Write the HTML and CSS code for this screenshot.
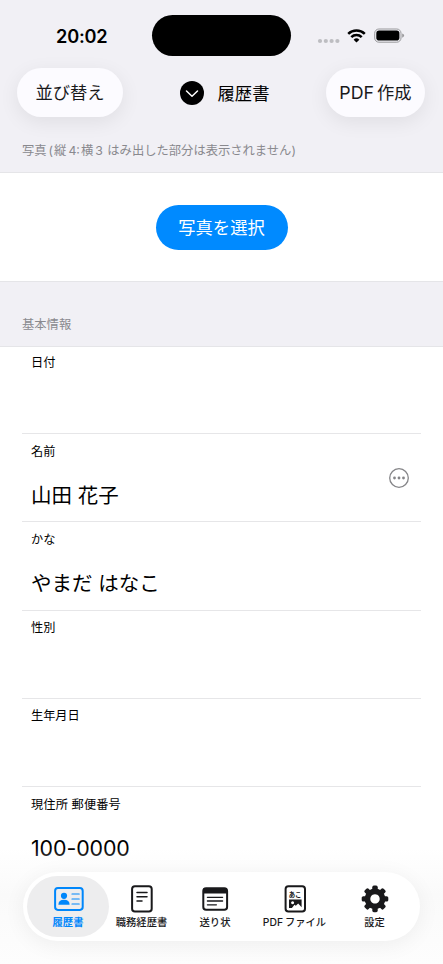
FILE: index.html
```html
<!DOCTYPE html>
<html lang="ja">
<head>
<meta charset="utf-8">
<title>履歴書</title>
<link rel="stylesheet" href="styles.css">
</head>
<body>
<div class="screen">
  <header class="top">
    <div class="status">
      <span class="time">20:02</span>
      <span class="island"></span>
      <svg class="status-icons" width="88" height="18" viewBox="0 0 88 18">
        <g fill="#bdbdc1"><circle cx="3" cy="14" r="2.1"/><circle cx="8.8" cy="14" r="2.1"/><circle cx="14.6" cy="14" r="2.1"/><circle cx="20.4" cy="14" r="2.1"/></g>
        <g fill="none" stroke="#000" stroke-width="2.5"><path d="M31.2 6.9a11.8 11.8 0 0 1 16.6 0"/><path d="M34.3 10.2a7.4 7.4 0 0 1 10.4 0"/></g>
        <path d="M36.6 12.7a4.1 4.1 0 0 1 5.8 0l-2.9 2.9z"/>
        <rect x="57.7" y="2" width="26.3" height="13.2" rx="4.2" fill="none" stroke="#98989b"/>
        <rect x="59.3" y="3.6" width="23.1" height="10" rx="2.8"/>
        <path d="M85.2 6.4q1.9.6 1.9 2.2t-1.9 2.2z" fill="#98989b"/>
      </svg>
    </div>
    <nav class="navbar">
      <button class="glass sort">並び替え</button>
      <h1 class="title">
        <svg width="24" height="24" viewBox="0 0 24 24"><circle cx="12" cy="12" r="12"/><path d="m6.5 10 5.5 5.2 5.5-5.2" fill="none" stroke="#fff" stroke-width="1.5" stroke-linecap="round" stroke-linejoin="round"/></svg>
        <span>履歴書</span>
      </h1>
      <button class="glass create"><span class="latin">PDF</span>作成</button>
    </nav>
    <p class="caption photo-caption">写真<span class="paren">(</span>縦<span class="num">4:</span>横<span class="num">3</span> はみ出した部分は表示されません)</p>
  </header>
  <section class="photo"><button class="pick">写真を選択</button></section>
  <p class="caption section-title">基本情報</p>
  <main class="rows">
    <div class="row first"><span class="label">日付</span></div>
    <div class="row"><span class="label">名前</span><span class="value">山田 花子</span>
      <svg class="more" width="20" height="20" viewBox="0 0 20 20"><circle cx="10" cy="10" r="9.3" fill="none" stroke="#858588" stroke-width="1.3"/><g fill="#858588"><circle cx="5.5" cy="10" r="1.4"/><circle cx="10" cy="10" r="1.4"/><circle cx="14.5" cy="10" r="1.4"/></g></svg>
    </div>
    <div class="row"><span class="label">かな</span><span class="value">やまだ はなこ</span></div>
    <div class="row"><span class="label">性別</span></div>
    <div class="row"><span class="label">生年月日</span></div>
    <div class="row last"><span class="label wide">現住所 郵便番号</span><span class="value zip">100-0000</span></div>
  </main>
  <div class="dock">
    <nav class="tabs">
      <a class="tab active">
        <svg width="32" height="28" viewBox="0 0 32 28"><rect x="3.1" y="3.1" width="27.6" height="21.8" rx="2.8" fill="none" stroke="currentColor" stroke-width="2"/><circle cx="12" cy="10.8" r="3.1" fill="currentColor"/><path d="M6.4 19.8q0-5 5.6-5t5.6 5z" fill="currentColor"/><path d="M20 9h7.2M20 14h7.2M20 19h7.2" stroke="currentColor" stroke-width="1.2" stroke-linecap="round"/></svg>
        <span>履歴書</span>
      </a>
      <a class="tab">
        <svg width="32" height="28" viewBox="0 0 32 28"><rect x="6.1" y="1.3" width="19.6" height="25.2" rx="2.8" fill="none" stroke="currentColor" stroke-width="2"/><path d="M11 7.4h10M11 11.8h10M11 16h5" stroke="currentColor" stroke-width="1.5" stroke-linecap="round"/></svg>
        <span>職務経歴書</span>
      </a>
      <a class="tab">
        <svg width="32" height="28" viewBox="0 0 32 28"><rect x="4.3" y="3.2" width="23.8" height="21.6" rx="2.8" fill="none" stroke="currentColor" stroke-width="2"/><path d="M4 8.4V5q0-2 2-2h20q2 0 2 2v3.4z" fill="currentColor"/><path d="M8.4 12.3h15.2M8.4 16h15.2M8.4 19.8h9" stroke="currentColor" stroke-width="1.3" stroke-linecap="round"/></svg>
        <span>送り状</span>
      </a>
      <a class="tab">
        <svg width="32" height="28" viewBox="0 0 32 28"><rect x="6.6" y="1.3" width="19.4" height="25.2" rx="2.8" fill="none" stroke="currentColor" stroke-width="2"/><text x="9.7" y="12.1" class="mini">あこ</text><path fill-rule="evenodd" d="M10 14.6h12.6v7.6l-3.4-3.8-2.4 2.3-1.3-1-2.6 3.3H10zM13.6 16.2a1.5 1.5 0 1 0 .01 0z" fill="currentColor"/></svg>
        <span><span class="pdf">PDF</span>ファイル</span>
      </a>
      <a class="tab">
        <svg width="32" height="28" viewBox="0 0 32 28"><g fill="currentColor" transform="translate(16 13.9)"><path fill-rule="evenodd" d="M0-10.3a10.3 10.3 0 1 0 .01 0zM0-4.7a4.7 4.7 0 1 1-.01 0z"/><g id="teeth"><rect x="-2.7" y="-13.3" width="5.4" height="5" rx="1.6"/><rect x="-2.7" y="8.3" width="5.4" height="5" rx="1.6"/><rect x="-13.3" y="-2.7" width="5" height="5.4" rx="1.6"/><rect x="8.3" y="-2.7" width="5" height="5.4" rx="1.6"/></g><use href="#teeth" transform="rotate(45)"/></g></svg>
        <span>設定</span>
      </a>
    </nav>
  </div>
</div>
</body>
</html>
```
FILE: styles.css
```css
* { box-sizing: border-box; }
body {
  margin: 0;
  background: #fff;
  color: #000;
  font-family: Inter, "Noto Sans CJK JP", sans-serif;
}
button { border: 0; padding: 0; font: inherit; color: inherit; }
svg { display: block; flex: none; }
.screen { position: relative; width: 443px; height: 964px; overflow: hidden; }
.top { height: 173px; background: #f1f0f5; border-bottom: 1px solid #e5e5e8; }
.status {
  display: grid;
  grid-template-columns: 152px 139px 1fr;
  align-items: center;
  height: 68px;
  padding-top: 3px;
}
.time { padding-left: 56px; font-size: 18.2px; font-weight: 600; line-height: 24px; letter-spacing: -.2px; }
.island { height: 41px; border-radius: 21px; background: #000; }
.status-icons { margin-left: 26px; }
.navbar {
  display: flex;
  align-items: center;
  justify-content: space-between;
  height: 49px;
  padding: 0 18px 0 17px;
}
.glass {
  height: 49px;
  border-radius: 25px;
  background: #fcfbff;
  box-shadow: 0 5px 20px rgba(0, 0, 0, .075);
  font-size: 17.3px;
  line-height: 50px;
  white-space: nowrap;
  color: #19191b;
}
.sort { width: 106px; }
.create { width: 99px; }
.latin { margin-right: 3px; font-size: 17.8px; }
.title { display: flex; align-items: center; gap: 14px; margin: 0; font-size: 17.3px; font-weight: 400; }
.caption { margin: 0; padding-left: 22px; font-size: 12.3px; line-height: 18px; color: #89898e; white-space: nowrap; }
.photo-caption { padding-top: 25px; }
.paren { margin: 0 1px 0 2px; }
.num { margin: 0 1px 0 2px; }
.photo { display: flex; justify-content: center; align-items: center; height: 108px; }
.pick { width: 132px; height: 45px; border-radius: 23px; background: #008aff; color: #fff; font-size: 17.3px; line-height: 45px; }
.section-title { height: 66px; padding-top: 34px; background: #f1f0f5; border: solid #e5e5e8; border-width: 1px 0; }
.rows { padding: 0 22px; }
.row {
  position: relative;
  display: flex;
  flex-direction: column;
  height: 88.25px;
  padding: 8.5px 9px 0;
  border-bottom: 1px solid #e6e6e8;
}
.row.first { height: 87px; padding-top: 7px; }
.row.last { border-bottom: 0; }
.label { font-size: 12.2px; line-height: 18px; }
.label.wide { letter-spacing: .15px; }
.value { margin-top: 19px; font-size: 20.5px; line-height: 32px; }
.zip { margin-top: 18px; letter-spacing: -.1px; font-size: 21.4px; }
.more { position: absolute; right: 12px; top: 34px; }
.dock {
  position: absolute;
  inset: auto 0 0 0;
  height: 116px;
  padding: 24px 23px 0;
  background: linear-gradient(rgba(250, 250, 250, 0), #fafafa 40%, #fdfdfd);
}
.tabs {
  display: grid;
  grid-template-columns: 82px 65px 82px 77px 83px;
  height: 69px;
  width: 397px;
  padding: 4px;
  border-radius: 35px;
  background: #fff;
  box-shadow: 0 4px 22px rgba(0, 0, 0, .06);
}
.tab {
  display: flex;
  flex-direction: column;
  align-items: center;
  height: 61px;
  padding-top: 9px;
  border-radius: 31px;
  font-size: 10.3px;
  font-weight: 500;
  line-height: 16px;
  white-space: nowrap;
  color: #19191b;
}
.tab span { margin-top: 1px; }
.tab.active { background: #ededee; color: #0087fb; }
.tab.active span { font-weight: 700; }
.tab .pdf { margin-right: 2px; }
.mini { font: 700 6.4px "Noto Sans CJK JP", sans-serif; fill: currentColor; }
```
